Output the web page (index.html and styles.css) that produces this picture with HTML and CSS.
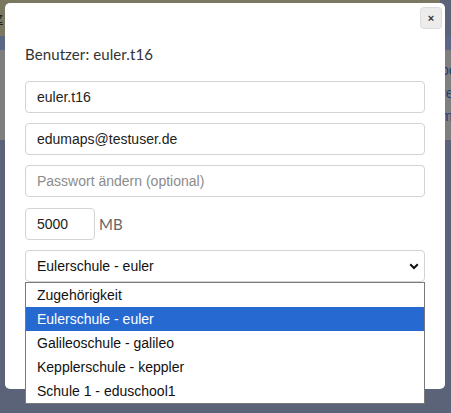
FILE: index.html
```html
<!DOCTYPE html>
<html lang="de">
<head>
<meta charset="utf-8">
<title>Benutzer bearbeiten</title>
<link rel="stylesheet" href="styles.css">
</head>
<body>
  <div class="page">
    <div class="topbar"><span class="crumb">z</span></div>
    <div class="subbar"></div>
    <div class="panel">
      <div class="panel-left"><span>r</span></div>
      <div class="panel-right"><span>pe</span><span>re</span><span>m</span></div>
    </div>
  </div>

  <div class="modal">
    <button class="close" type="button">×</button>
    <h4 class="title">Benutzer: euler.t16</h4>
    <form class="form">
      <input class="field" type="text" value="euler.t16">
      <input class="field" type="email" value="edumaps@testuser.de">
      <input class="field" type="password" placeholder="Passwort ändern (optional)">
      <div class="quota">
        <input class="field field-num" type="text" value="5000">
        <span class="unit">MB</span>
      </div>
      <div class="field select">
        <span>Eulerschule - euler</span>
        <svg width="10" height="7" viewBox="0 0 10 7"><path d="M1.2 1.3 L5 5 L8.8 1.3" fill="none" stroke="#111" stroke-width="2"/></svg>
      </div>
    </form>
  </div>

  <ul class="dropdown">
    <li>Zugehörigkeit</li>
    <li class="active">Eulerschule - euler</li>
    <li>Galileoschule - galileo</li>
    <li>Kepplerschule - keppler</li>
    <li>Schule 1 - eduschool1</li>
  </ul>
</body>
</html>
```

FILE: styles.css
```css
html, body {
  margin: 0;
  padding: 0;
}

body {
  width: 451px;
  height: 413px;
  background: #5a6378;
  font-family: "Liberation Sans", Arial, sans-serif;
  position: relative;
  overflow: hidden;
}

/* dimmed page behind the dialog */
.page {
  display: flex;
  flex-direction: column;
}

.topbar {
  height: 36px;
  width: 440px;
  background: #7b7862;
  font-size: 14px;
  color: #222;
}

.crumb {
  display: inline-block;
  margin: 10px 0 0 -4px;
  text-decoration: underline;
}

.subbar {
  height: 14px;
  background: #5a6886;
}

.panel {
  height: 90px;
  background: #7f7f7f;
  display: flex;
  justify-content: space-between;
  font-size: 14px;
}

.panel-left span {
  display: block;
  margin: 36px 0 0 -5px;
  color: #333;
}

.panel-right {
  display: flex;
  flex-direction: column;
  gap: 7px;
  padding-top: 12px;
  width: 10px;
  color: #1f3f7a;
}

/* dialog */
.modal {
  position: absolute;
  left: 5px;
  top: 3px;
  width: 440px;
  height: 386px;
  box-sizing: border-box;
  background: #fff;
  border-radius: 5px;
  padding: 41px 20px 0;
}

.close {
  position: absolute;
  top: 4px;
  right: 3px;
  width: 22px;
  height: 22px;
  padding: 0;
  border: 1px solid #dcdcdc;
  border-radius: 4px;
  background: #ececec;
  color: #333;
  font: bold 11px/20px "Liberation Sans", Arial, sans-serif;
}

.title {
  margin: 0 0 17px;
  font: 400 15px/20px Lato, "Open Sans", sans-serif;
  color: #333;
  letter-spacing: 0.1px;
}

.form {
  display: flex;
  flex-direction: column;
  gap: 10px;
}

.field {
  display: block;
  box-sizing: border-box;
  width: 400px;
  height: 32px;
  margin: 0;
  padding: 0 11px;
  border: 1px solid #d3d3d3;
  border-radius: 4px;
  background: #fff;
  font: 14px "Liberation Sans", Arial, sans-serif;
  color: #222;
  outline: none;
}

.field::placeholder {
  color: #8c8c8c;
}

.quota {
  display: flex;
  align-items: center;
  gap: 4px;
  margin-top: 1px;
}

.field-num {
  width: 70px;
}

.unit {
  font: 15px Lato, "Open Sans", sans-serif;
  color: #666;
}

.select {
  display: flex;
  align-items: center;
  justify-content: space-between;
  padding-right: 5px;
  color: #111;
}

/* open options list of the school select */
.dropdown {
  position: absolute;
  left: 25px;
  top: 282px;
  width: 400px;
  box-sizing: border-box;
  margin: 0;
  padding: 0;
  list-style: none;
  background: #fff;
  border: 1px solid #7a7a7a;
  font: 14px "Liberation Sans", Arial, sans-serif;
  color: #111;
}

.dropdown li {
  height: 24px;
  line-height: 24px;
  padding-left: 11px;
}

.dropdown li.active {
  background: #266ad1;
  color: #fff;
}
```
